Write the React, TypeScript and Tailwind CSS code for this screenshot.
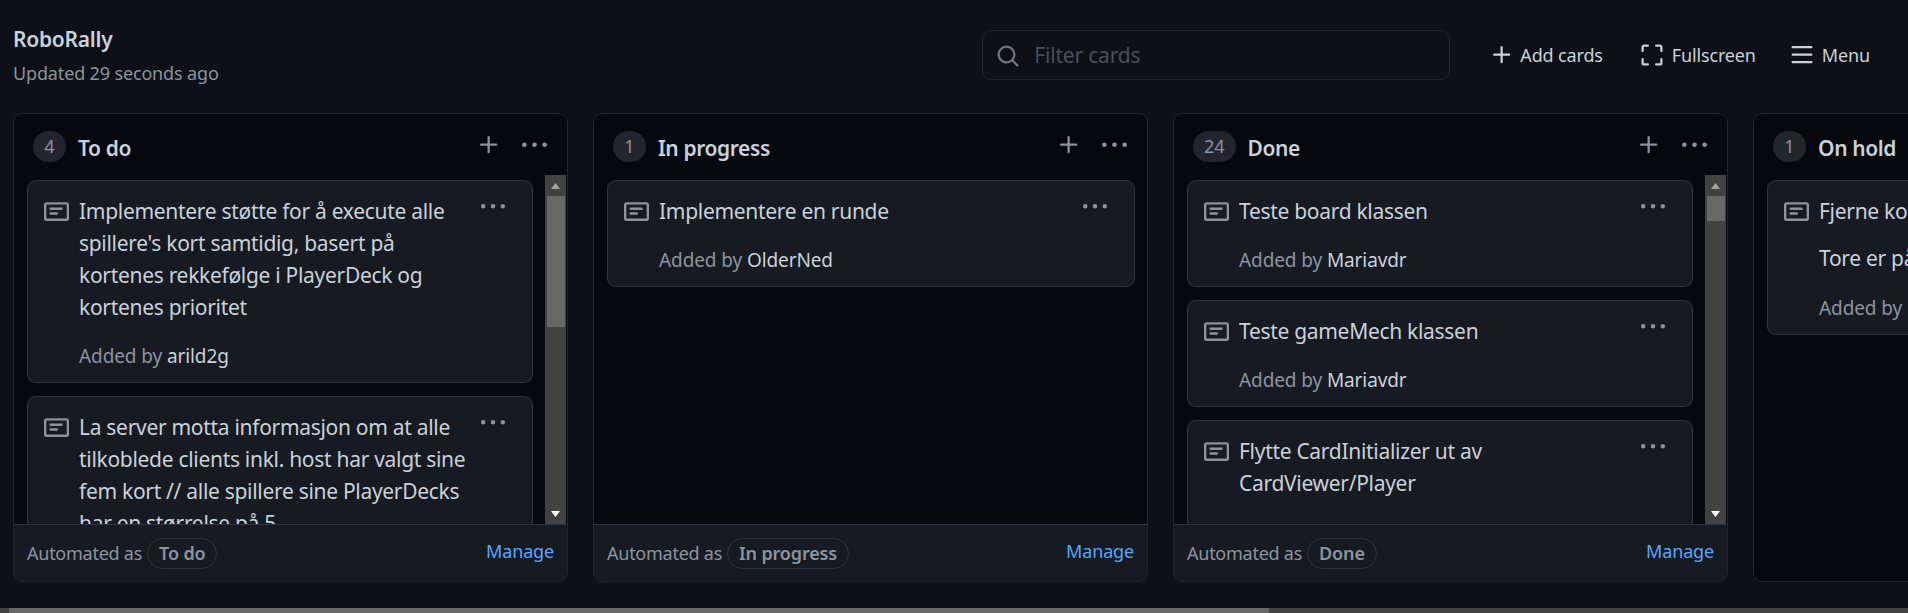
type Card = { title: string; note?: string; author: string }
type Column = {
  name: string
  count: number
  cards: Card[]
  automated?: string
  thumb?: string
}

const columns: Column[] = [
  {
    name: 'To do',
    count: 4,
    automated: 'To do',
    thumb: 'h-[131px]',
    cards: [
      {
        title: "Implementere støtte for å execute alle spillere's kort samtidig, basert på kortenes rekkefølge i PlayerDeck og kortenes prioritet",
        author: 'arild2g',
      },
      {
        title: 'La server motta informasjon om at alle tilkoblede clients inkl. host har valgt sine fem kort // alle spillere sine PlayerDecks har en størrelse på 5',
        author: 'arild2g',
      },
    ],
  },
  {
    name: 'In progress',
    count: 1,
    automated: 'In progress',
    cards: [{ title: 'Implementere en runde', author: 'OlderNed' }],
  },
  {
    name: 'Done',
    count: 24,
    automated: 'Done',
    thumb: 'h-[25px]',
    cards: [
      { title: 'Teste board klassen', author: 'Mariavdr' },
      { title: 'Teste gameMech klassen', author: 'Mariavdr' },
      { title: 'Flytte CardInitializer ut av CardViewer/Player', author: 'Mariavdr' },
    ],
  },
  {
    name: 'On hold',
    count: 1,
    cards: [{ title: 'Fjerne kort', note: 'Tore er på saken', author: 'Mariavdr' }],
  },
]

// octicons, 16px grid
const icons = {
  note: 'M0 3.75C0 2.784.784 2 1.75 2h12.5c.966 0 1.75.784 1.75 1.75v8.5A1.75 1.75 0 0 1 14.25 14H1.75A1.75 1.75 0 0 1 0 12.25Zm1.75-.25a.25.25 0 0 0-.25.25v8.5c0 .138.112.25.25.25h12.5a.25.25 0 0 0 .25-.25v-8.5a.25.25 0 0 0-.25-.25ZM3.5 6.25a.75.75 0 0 1 .75-.75h7a.75.75 0 0 1 0 1.5h-7a.75.75 0 0 1-.75-.75Zm.75 2.25h4a.75.75 0 0 1 0 1.5h-4a.75.75 0 0 1 0-1.5Z',
  kebab: 'M8 9a1.5 1.5 0 1 0 0-3 1.5 1.5 0 0 0 0 3ZM1.5 9a1.5 1.5 0 1 0 0-3 1.5 1.5 0 0 0 0 3Zm13 0a1.5 1.5 0 1 0 0-3 1.5 1.5 0 0 0 0 3Z',
  plus: 'M7.75 2a.75.75 0 0 1 .75.75V7h4.25a.75.75 0 0 1 0 1.5H8.5v4.25a.75.75 0 0 1-1.5 0V8.5H2.75a.75.75 0 0 1 0-1.5H7V2.75A.75.75 0 0 1 7.75 2Z',
  search: 'M10.68 11.74a6 6 0 0 1-7.922-8.982 6 6 0 0 1 8.982 7.922l3.04 3.04a.749.749 0 0 1-.326 1.275.749.749 0 0 1-.734-.215ZM11.5 7a4.499 4.499 0 1 0-8.997 0A4.499 4.499 0 0 0 11.5 7Z',
  screenFull: 'M1.75 10a.75.75 0 0 1 .75.75v2.5c0 .138.112.25.25.25h2.5a.75.75 0 0 1 0 1.5h-2.5A1.75 1.75 0 0 1 1 13.25v-2.5a.75.75 0 0 1 .75-.75Zm12.5 0a.75.75 0 0 1 .75.75v2.5A1.75 1.75 0 0 1 13.25 15h-2.5a.75.75 0 0 1 0-1.5h2.5a.25.25 0 0 0 .25-.25v-2.5a.75.75 0 0 1 .75-.75ZM2.75 2.5a.25.25 0 0 0-.25.25v2.5a.75.75 0 0 1-1.5 0v-2.5C1 1.784 1.784 1 2.75 1h2.5a.75.75 0 0 1 0 1.5ZM10 1.75a.75.75 0 0 1 .75-.75h2.5c.966 0 1.75.784 1.75 1.75v2.5a.75.75 0 0 1-1.5 0v-2.5a.25.25 0 0 0-.25-.25h-2.5a.75.75 0 0 1-.75-.75Z',
  bars: 'M1 2.75A.75.75 0 0 1 1.75 2h12.5a.75.75 0 0 1 0 1.5H1.75A.75.75 0 0 1 1 2.75Zm0 5A.75.75 0 0 1 1.75 7h12.5a.75.75 0 0 1 0 1.5H1.75A.75.75 0 0 1 1 7.75ZM1.75 12h12.5a.75.75 0 0 1 0 1.5H1.75a.75.75 0 0 1 0-1.5Z',
}

function Icon({ d, size = 24, className }: { d: string; size?: number; className?: string }) {
  return (
    <svg width={size} height={size} viewBox="0 0 16 16" fill="currentColor" className={`shrink-0 ${className ?? ''}`}>
      <path d={d} />
    </svg>
  )
}

function Scrollbar({ thumb }: { thumb: string }) {
  return (
    <div className="mr-px flex w-[21px] shrink-0 flex-col items-center bg-[#424242]">
      <div className="flex h-[21px] w-full items-center justify-center">
        <svg width="9" height="6" viewBox="0 0 9 6">
          <path d="M4.5 0 9 6H0Z" fill="#a3a3a3" />
        </svg>
      </div>
      <div className={`w-[18px] bg-[#686868] ${thumb}`} />
      <div className="mt-auto flex h-[21px] w-full items-center justify-center">
        <svg width="9" height="6" viewBox="0 0 9 6">
          <path d="M0 0h9L4.5 6Z" fill="#ffffff" />
        </svg>
      </div>
    </div>
  )
}

function ProjectCard({ card }: { card: Card }) {
  return (
    <div className="shrink-0 rounded-[9px] border border-[#30363d] bg-[#161b22] pt-[15px] pr-[27px] pb-[14px] pl-[16px]">
      <div className="flex items-start">
        <Icon d={icons.note} size={25} className="mt-[3px] mr-[10px] text-[#8b949e]" />
        <div className="-mt-px mb-px min-w-0 flex-1 text-[21px] leading-[32px] tracking-[-0.3px] text-[#c9d1d9]">{card.title}</div>
        <Icon d={icons.kebab} className="mt-[-1px] ml-[8px] text-[#8b949e]" />
      </div>
      <div className="pl-[35px]">
        {card.note && (
          <div className="mt-[14px] mb-[22px] text-[21px] leading-[32px] tracking-[-0.3px] whitespace-nowrap text-[#c9d1d9]">{card.note}</div>
        )}
        <div className={`text-[19px] leading-[24px] tracking-[-0.1px] whitespace-nowrap text-[#8b949e] ${card.note ? '' : 'mt-[20px]'}`}>
          Added by <span className="text-[#c9d1d9]">{card.author}</span>
        </div>
      </div>
    </div>
  )
}

function BoardColumn({ column }: { column: Column }) {
  return (
    <div className="flex h-full w-[555px] shrink-0 flex-col overflow-hidden rounded-[9px] border border-[#21262d] bg-[#05080d]">
      <div className="flex h-[61px] shrink-0 items-center pt-[4px] pr-[20px] pl-[19px]">
        <span className="flex h-[31px] min-w-[33px] items-center justify-center rounded-full bg-[#21262d] px-[11px] text-[18px] text-[#8b949e]">
          {column.count}
        </span>
        <h3 className="mt-[4px] ml-[12px] text-[21px] font-semibold tracking-[-0.4px] text-[#c9d1d9]">{column.name}</h3>
        <div className="ml-auto flex items-center gap-[21px] text-[#8b949e]">
          <Icon d={icons.plus} className="mt-[-3px]" />
          <Icon d={icons.kebab} size={25} className="mt-[-3px]" />
        </div>
      </div>
      <div className="flex min-h-0 flex-1">
        <div className="flex min-w-0 flex-1 flex-col gap-[13px] overflow-hidden pt-[5px] pr-[12px] pl-[13px]">
          {column.cards.map((card) => (
            <ProjectCard key={card.title} card={card} />
          ))}
        </div>
        {column.thumb && <Scrollbar thumb={column.thumb} />}
      </div>
      {column.automated && (
        <div className="flex h-[57px] shrink-0 items-center border-t border-[#30363d] bg-[#161b22] pr-[13px] pl-[13px]">
          <span className="text-[18px] tracking-[-0.25px] text-[#8b949e]">Automated as</span>
          <span className="ml-[5px] flex h-[31px] items-center rounded-full border border-[#30363d] px-[11px] text-[18px] font-semibold tracking-[-0.15px] text-[#8b949e]">
            {column.automated}
          </span>
          <span className="mt-[-3px] ml-auto text-[18px] tracking-[-0.15px] text-[#58a6ff]">Manage</span>
        </div>
      )}
    </div>
  )
}

export default function App() {
  return (
    <div className="flex h-screen flex-col overflow-hidden bg-[#0d1117] font-['Noto_Sans','Open_Sans',sans-serif]">
      <header className="flex h-[113px] shrink-0 items-start pr-[38px] pl-[13px]">
        <div className="mt-[24px]">
          <h2 className="text-[21px] leading-[30px] font-semibold tracking-[-0.25px] text-[#c9d1d9]">RoboRally</h2>
          <p className="mt-[7px] text-[18px] leading-[24px] tracking-[-0.15px] text-[#8b949e]">Updated 29 seconds ago</p>
        </div>
        <div className="mt-[30px] ml-auto flex h-[50px] w-[468px] items-center rounded-[9px] border border-[#21262d] pt-[2px] pl-[13px]">
          <Icon d={icons.search} className="text-[#6e7681]" />
          <span className="ml-[14px] text-[21px] tracking-[-0.2px] text-[#484f58]">Filter cards</span>
        </div>
        <div className="mt-[30px] ml-[40px] flex h-[50px] items-center gap-[37px] text-[18px] tracking-[-0.15px] text-[#c9d1d9]">
          <button className="flex items-center gap-[6px]">
            <Icon d={icons.plus} />
            Add cards
          </button>
          <button className="flex items-center gap-[8px]">
            <Icon d={icons.screenFull} />
            Fullscreen
          </button>
          <button className="-ml-[3px] flex items-center gap-[8px]">
            <Icon d={icons.bars} />
            Menu
          </button>
        </div>
      </header>
      <main className="flex h-[469px] shrink-0 gap-[25px] pl-[13px]">
        {columns.map((column) => (
          <BoardColumn key={column.name} column={column} />
        ))}
      </main>
      <div className="mt-auto flex h-[5px] shrink-0 bg-[#424242]">
        <div className="ml-[9px] w-[1260px] bg-[#686868]" />
      </div>
    </div>
  )
}
